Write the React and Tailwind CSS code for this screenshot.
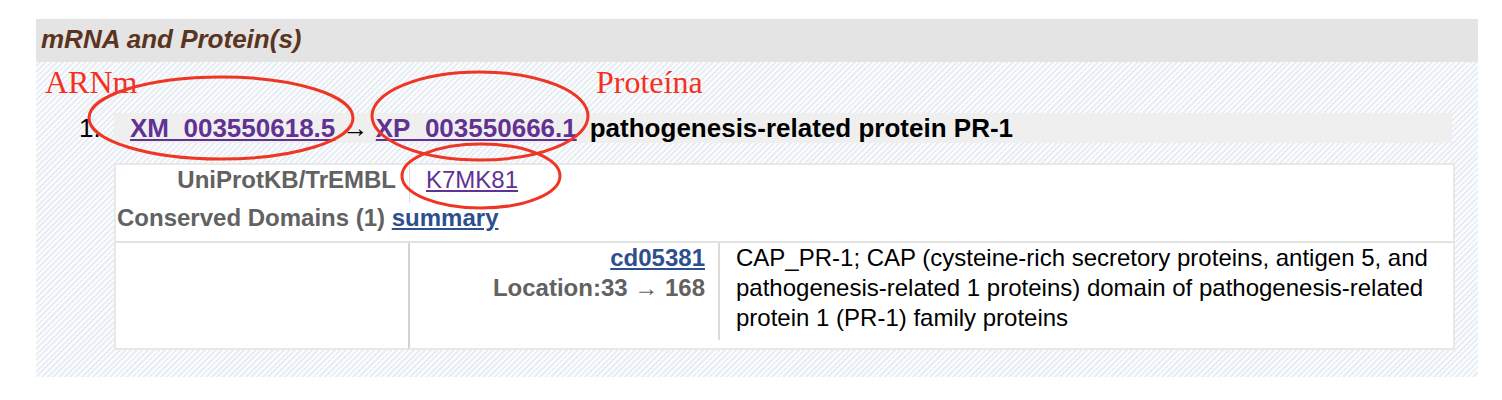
import React from "react";

const purple = "text-[#613294]";
const blue = "text-[#2e4f8e]";

const Annotations = () => (
  <>
    <span className="absolute left-[45px] top-[66px] font-['Liberation_Serif',serif] text-[32px] leading-none text-[#f5301f]">
      ARNm
    </span>
    <span className="absolute left-[596px] top-[66px] font-['Liberation_Serif',serif] text-[32px] leading-none text-[#f5301f]">
      Proteína
    </span>
    <svg
      className="pointer-events-none absolute left-0 top-0"
      width="1502"
      height="400"
      viewBox="0 0 1502 400"
      fill="none"
      stroke="#ef3524"
      strokeWidth="3"
    >
      <ellipse cx="221" cy="118" rx="132" ry="41" />
      <ellipse cx="480" cy="116" rx="108" ry="44" />
      <ellipse cx="481" cy="176" rx="79" ry="32" />
    </svg>
  </>
);

const App = () => {
  return (
    <div className="relative h-[400px] w-[1502px] bg-white font-['Liberation_Sans',Arial,sans-serif]">
      <div className="ml-[36px] w-[1442px] pt-[19px]">
        <div className="h-[43px] bg-[#e4e4e4] pl-[5px] pt-[5px]">
          <h2 className="text-[26px] font-bold italic leading-[30px] text-[#5b3421]">
            mRNA and Protein(s)
          </h2>
        </div>

        <div className="bg-[repeating-linear-gradient(135deg,#fbfcfd_0px,#fbfcfd_2px,#e9eef5_2px,#e9eef5_4px)] pb-[27px] pt-[51px]">
          <div className="flex">
            <div className="w-[78px] pl-[43px] text-[26px] leading-[30px] text-black">1.</div>
            <div className="h-[30px] w-[1338px] bg-[#efefef] pl-[16px] text-[26px] font-bold leading-[30px] text-black">
              <a href="#" className={`${purple} underline`}>
                XM_003550618.5
              </a>{" "}
              →{" "}
              <a href="#" className={`${purple} underline`}>
                XP_003550666.1
              </a>
              <span className="ml-[13px]">pathogenesis-related protein PR-1</span>
            </div>
          </div>

          <div className="ml-[78px] mt-[20px] w-[1341px] border-2 border-[#e8e8e8] bg-white text-[24px] leading-[30px]">
            <div className="flex h-[38px]">
              <div className="w-[294px] border-r border-[#dcdcdc] pr-[13px] text-right font-bold text-[#626262]">
                UniProtKB/TrEMBL
              </div>
              <div className="pl-[16px]">
                <a href="#" className={`${purple} underline`}>
                  K7MK81
                </a>
              </div>
            </div>
            <div className="h-[38px] pl-[1px] font-bold text-[#626262]">
              Conserved Domains (1){" "}
              <a href="#" className={`${blue} underline`}>
                summary
              </a>
            </div>
            <div className="flex h-[107px] border-t-2 border-[#e2e2e2]">
              <div className="w-[294px] border-r-2 border-[#d3d3d3]" />
              <div className="w-[308px] pr-[13px] text-right font-bold text-[#626262]">
                <a href="#" className={`${blue} underline`}>
                  cd05381
                </a>
                <div>Location:33 → 168</div>
              </div>
              <div className="flex-1 self-start border-l-2 border-[#dadada] pb-[7px] pl-[16px] pr-[12px] text-black">
                CAP_PR-1; CAP (cysteine-rich secretory proteins, antigen 5, and
                pathogenesis-related 1 proteins) domain of pathogenesis-related
                protein 1 (PR-1) family proteins
              </div>
            </div>
          </div>
        </div>
      </div>

      <Annotations />
    </div>
  );
};

export default App;
